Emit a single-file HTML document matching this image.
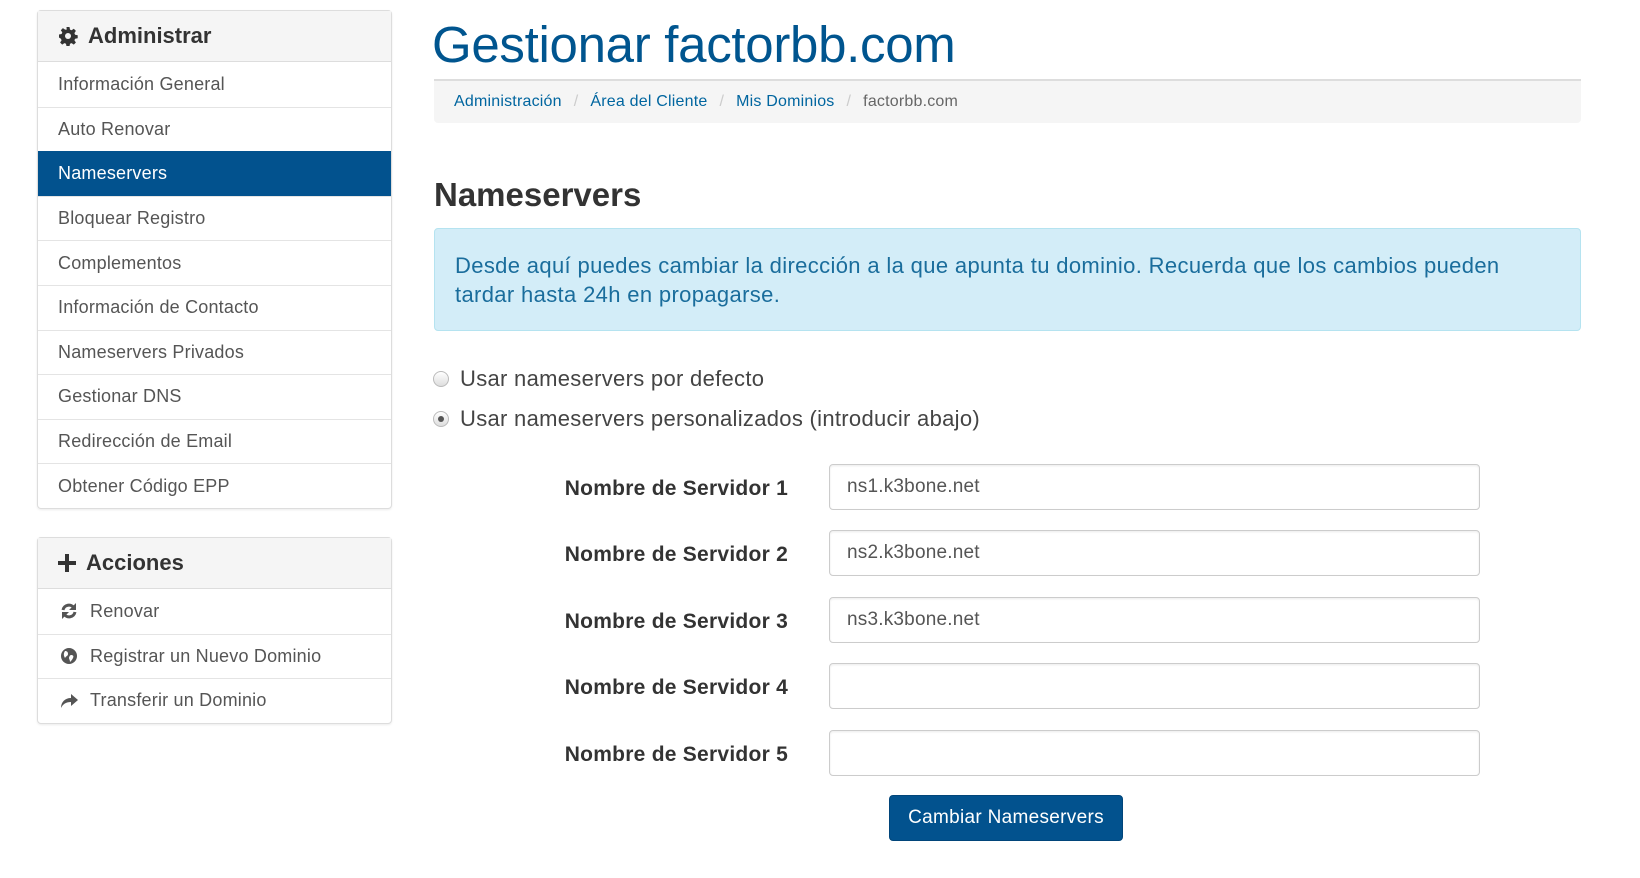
<!DOCTYPE html>
<html><head><meta charset="utf-8"><style>
*{box-sizing:border-box;margin:0;padding:0}
body{width:1640px;height:878px;background:#fff;font-family:"Liberation Sans",sans-serif;color:#333;position:relative;overflow:hidden}
.panel{position:absolute;left:37px;width:355px;border:1px solid #ddd;border-radius:4px;background:#fff;box-shadow:0 1px 2px rgba(0,0,0,.08)}
.ph{height:51px;background:#f5f5f5;border-bottom:1px solid #ddd;font-size:22px;font-weight:bold;color:#333;padding-left:20px;display:flex;align-items:center}
.ph svg{margin-right:10px}
.it{height:44.6px;border-top:1px solid #e4e4e4;font-size:18px;color:#555;padding-left:20px;display:flex;align-items:center;letter-spacing:0.2px}
.ph+.it{border-top:none}
.it.act{background:#02528e;color:#fff;border-color:#02528e}
.it svg{margin-right:12px;margin-left:2px}
h1{position:absolute;left:432px;top:15px;font-size:51px;font-weight:normal;color:#00558f;letter-spacing:-0.3px}
.bc{position:absolute;left:434px;top:79px;width:1147px;height:44px;background:#f5f5f5;border-top:2px solid #ddd;border-radius:0 0 4px 4px;font-size:16px;padding-left:20px;display:flex;align-items:center;color:#666;letter-spacing:0.2px}
.bc a{color:#00659f;text-decoration:none}
.bc .s{color:#ccc;margin:0 12px}
h2{position:absolute;left:434px;top:176px;font-size:33px;font-weight:bold;color:#333}
.al{position:absolute;left:434px;top:228px;width:1147px;height:103px;background:#d3edf8;border:1px solid #b5e3f0;border-radius:4px;color:#1a6d9c;font-size:22px;letter-spacing:0.35px;line-height:29px;padding:22px 20px 22px 20px}
.rd{position:absolute;left:433px;font-size:22px;color:#444;display:flex;align-items:center;letter-spacing:0.3px}
.rd i{width:16px;height:16px;border-radius:50%;border:1px solid #bbb;background:linear-gradient(#fff,#ddd);margin-right:11px;display:inline-block;position:relative}
.rd i.on:after{content:"";position:absolute;left:4px;top:4px;width:6px;height:6px;border-radius:50%;background:#555}
.lb{position:absolute;left:478px;width:310px;text-align:right;font-size:21px;color:#333;font-weight:bold;letter-spacing:0.25px}
.in{position:absolute;left:829px;width:651px;height:46px;border:1px solid #ccc;border-radius:4px;box-shadow:inset 0 1px 2px rgba(0,0,0,.08);font-size:19px;color:#555;padding-left:17px;display:flex;align-items:center;letter-spacing:0.2px}
.btn{position:absolute;left:889px;top:795px;width:234px;height:46px;background:#02528e;border:1px solid #01457a;border-radius:4px;color:#fff;font-size:19px;display:flex;align-items:center;justify-content:center;letter-spacing:0.3px}
</style></head><body>
<div class="panel" style="top:10px">
<div class="ph"><svg width="20" height="20" viewBox="0 0 20 20"><path fill="#333" d="M8.5 1h3l.5 2.6 1.6.7 2.2-1.5 2.1 2.1-1.5 2.2.7 1.6 2.6.5v3l-2.6.5-.7 1.6 1.5 2.2-2.1 2.1-2.2-1.5-1.6.7-.5 2.6h-3l-.5-2.6-1.6-.7-2.2 1.5-2.1-2.1 1.5-2.2-.7-1.6L1 11.5v-3l2.6-.5.7-1.6-1.5-2.2 2.1-2.1 2.2 1.5L8.7 3.6z"/><circle cx="10" cy="10" r="3" fill="#f5f5f5"/></svg>Administrar</div>
<div class="it">Información General</div>
<div class="it">Auto Renovar</div>
<div class="it act">Nameservers</div>
<div class="it">Bloquear Registro</div>
<div class="it">Complementos</div>
<div class="it">Información de Contacto</div>
<div class="it">Nameservers Privados</div>
<div class="it">Gestionar DNS</div>
<div class="it">Redirección de Email</div>
<div class="it">Obtener Código EPP</div>
</div>
<div class="panel" style="top:537px">
<div class="ph"><svg width="18" height="18" viewBox="0 0 18 18"><path fill="#333" d="M7 0h4v7h7v4h-7v7H7v-7H0V7h7z"/></svg>Acciones</div>
<div class="it"><svg width="18" height="18" viewBox="0 0 18 18" fill="none" stroke="#555" stroke-width="3"><path d="M3 8a6 6 0 0 1 11-2"/><path d="M15 10a6 6 0 0 1-11 2"/><path fill="#555" stroke="none" d="M16 1v7h-7z M2 17v-7h7z"/></svg>Renovar</div>
<div class="it"><svg width="18" height="18" viewBox="0 0 18 18"><circle cx="9" cy="9" r="8" fill="#555"/><path fill="#fff" d="M5 4c2 0 3 1 3 3s-2 2-3 4c-1-2-2-4 0-7zm6 4c2 0 3 1 2 3-1 2-2 3-3 4 0-2-1-3-1-4s1-3 2-3z"/></svg>Registrar un Nuevo Dominio</div>
<div class="it"><svg width="18" height="18" viewBox="0 0 18 18"><path fill="#555" d="M11 2l7 6-7 6v-4C6 10 3 12 1 16c0-6 4-10 10-10z"/></svg>Transferir un Dominio</div>
</div>
<h1>Gestionar factorbb.com</h1>
<div class="bc"><a>Administración</a><span class="s">/</span><a>Área del Cliente</a><span class="s">/</span><a>Mis Dominios</a><span class="s">/</span>factorbb.com</div>
<h2>Nameservers</h2>
<div class="al">Desde aquí puedes cambiar la dirección a la que apunta tu dominio. Recuerda que los cambios pueden<br>tardar hasta 24h en propagarse.</div>
<div class="rd" style="top:366px"><i></i>Usar nameservers por defecto</div>
<div class="rd" style="top:406px"><i class="on"></i>Usar nameservers personalizados (introducir abajo)</div>
<div class="lb" style="top:477px">Nombre de Servidor 1</div>
<div class="in" style="top:464px">ns1.k3bone.net</div>
<div class="lb" style="top:543px">Nombre de Servidor 2</div>
<div class="in" style="top:530px">ns2.k3bone.net</div>
<div class="lb" style="top:610px">Nombre de Servidor 3</div>
<div class="in" style="top:597px">ns3.k3bone.net</div>
<div class="lb" style="top:676px">Nombre de Servidor 4</div>
<div class="in" style="top:663px"></div>
<div class="lb" style="top:743px">Nombre de Servidor 5</div>
<div class="in" style="top:730px"></div>
<div class="btn">Cambiar Nameservers</div>
</body></html>
